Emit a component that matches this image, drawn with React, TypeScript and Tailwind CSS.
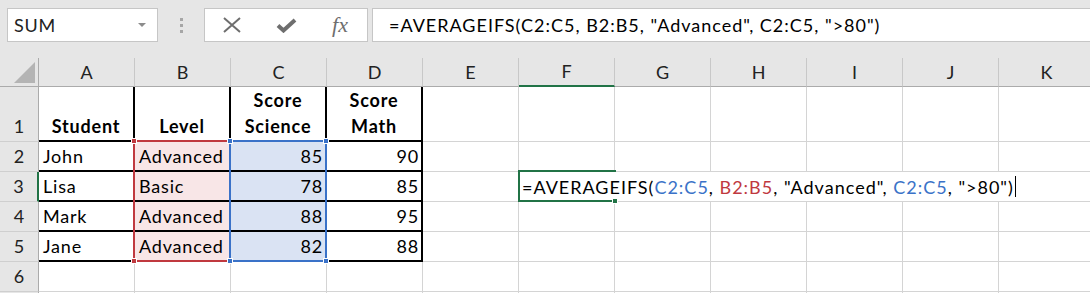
import React from 'react';
import clsx from 'clsx';

const cols = ['A', 'B', 'C', 'D', 'E', 'F', 'G', 'H', 'I', 'J', 'K'];

const students = [
  { name: 'John', level: 'Advanced', science: 85, math: 90 },
  { name: 'Lisa', level: 'Basic', science: 78, math: 85 },
  { name: 'Mark', level: 'Advanced', science: 88, math: 95 },
  { name: 'Jane', level: 'Advanced', science: 82, math: 88 }
];

type CellProps = {
  children?: React.ReactNode;
  edge?: boolean;
  fill?: string;
  align?: 'left' | 'right' | 'center';
  bold?: boolean;
};

function Cell({ children, edge, fill, align = 'left', bold }: CellProps) {
  return (
    <div
      className={clsx(
        'flex w-[96px] shrink-0 items-end overflow-hidden whitespace-pre-line pb-[1px] leading-[26px]',
        edge ? 'border-r-2 border-b-2 border-black' : 'border-r border-b border-[#d4d4d4]',
        align === 'right' && 'justify-end pr-[2px] text-right',
        align === 'center' && 'justify-center text-center',
        align === 'left' && 'pl-[4px]',
        bold && 'font-bold',
        fill
      )}>
      {children}
    </div>
  );
}

function RowHead({ n, active }: { n?: number; active?: boolean }) {
  return (
    <div
      className={clsx(
        'flex w-[39px] shrink-0 items-end justify-center border-b border-[#cfcfcf] bg-[#e6e6e6] pb-[2px] leading-[26px] tracking-normal text-[#222]',
        active ? 'border-r-2 border-r-[#217346]' : 'border-r border-r-[#ababab]'
      )}>
      {n}
    </div>
  );
}

function Handle({ x, y, color }: { x: number; y: number; color: string }) {
  return (
    <span
      className={clsx('absolute size-[6px] border border-white', color)}
      style={{ left: x - 3, top: y - 61 }}
    />
  );
}

const blue = 'text-[#3a72c8]';
const red = 'text-[#c0393f]';

function Formula() {
  return (
    <>
      {'=AVERAGEIFS('}
      <span className={blue}>C2:C5</span>
      {', '}
      <span className={red}>B2:B5</span>
      {', "Advanced", '}
      <span className={blue}>C2:C5</span>
      {', ">80")'}
    </>
  );
}

export default function App() {
  return (
    <div className="h-[293px] w-[1090px] overflow-hidden bg-[#e6e6e6] font-['Lato',sans-serif] text-[18px] tracking-[0.8px] text-black">
      {/* formula bar */}
      <div className="flex h-[58px] items-start pt-2">
        <div className="ml-[7px] flex h-[34px] w-[151px] items-center justify-between border border-[#c6c6c6] bg-white pl-[6px] pr-[11px]">
          <span className="text-[#222]">SUM</span>
          <svg width="8" height="5" viewBox="0 0 8 5">
            <polygon points="0,0 8,0 4,4" fill="#8c8c8c" />
          </svg>
        </div>
        <div className="flex h-[34px] w-[46px] flex-col items-center justify-center gap-[3px]">
          <span className="size-[3px] bg-[#a6a6a6]" />
          <span className="size-[3px] bg-[#a6a6a6]" />
          <span className="size-[3px] bg-[#a6a6a6]" />
        </div>
        <div className="grid h-[34px] w-[164px] grid-cols-3 items-center justify-items-center border border-[#c6c6c6] bg-white">
          <svg width="18" height="16" viewBox="0 0 18 16">
            <path d="M1 1 L17 15 M17 1 L1 15" stroke="#6e6e6e" strokeWidth="2" />
          </svg>
          <svg width="21" height="15" viewBox="0 0 21 15">
            <path d="M2 7.5 L7.5 12.5 L19 2" stroke="#6e6e6e" strokeWidth="4" fill="none" />
          </svg>
          <span className="font-['Liberation_Serif',serif] text-[22px] leading-none tracking-normal text-[#6e6e6e] italic">
            fx
          </span>
        </div>
        <div className="ml-[4px] flex h-[34px] flex-1 items-center whitespace-nowrap border-y border-l border-[#c6c6c6] bg-white pl-[16px] tracking-[1px]">
          =AVERAGEIFS(C2:C5, B2:B5, "Advanced", C2:C5, "&gt;80")
        </div>
      </div>

      {/* sheet */}
      <div className="relative bg-white">
        <div className="flex h-[29px] bg-[#e6e6e6] tracking-normal">
          <div className="flex w-[39px] shrink-0 items-end justify-end border-r border-b border-[#ababab] pr-[3px] pb-[3px]">
            <svg width="21" height="21" viewBox="0 0 21 21">
              <polygon points="21,0 21,21 0,21" fill="#b4b4b4" />
            </svg>
          </div>
          {cols.map(c => (
            <div
              key={c}
              className={clsx(
                'flex w-[96px] shrink-0 items-center justify-center border-r border-r-[#c8c8c8] text-[#222]',
                c === 'F' ? 'border-b-2 border-b-[#217346]' : 'border-b border-b-[#ababab]'
              )}>
              {c}
            </div>
          ))}
        </div>

        <div className="flex h-[55px]">
          <RowHead n={1} />
          <Cell edge align="center" bold>
            Student
          </Cell>
          <Cell edge align="center" bold>
            Level
          </Cell>
          <Cell edge align="center" bold>
            {'Score\nScience'}
          </Cell>
          <Cell edge align="center" bold>
            {'Score\nMath'}
          </Cell>
          {cols.slice(4).map(c => (
            <Cell key={c} />
          ))}
        </div>

        {students.map((s, i) => (
          <div key={s.name} className="flex h-[30px]">
            <RowHead n={i + 2} active={i === 1} />
            <Cell edge>{s.name}</Cell>
            <Cell edge fill="bg-[#f8e6e7]">{s.level}</Cell>
            <Cell edge fill="bg-[#dae3f3]" align="right">
              {s.science}
            </Cell>
            <Cell edge align="right">
              {s.math}
            </Cell>
            <Cell />
            {i === 1 ? (
              <div className="flex flex-1 shrink-0 items-end whitespace-pre border-b border-[#d4d4d4] pb-[1px] pl-[3px] leading-[26px] tracking-[1px]">
                <Formula />
                <span className="mb-[3px] ml-[1px] h-[21px] w-px bg-black" />
              </div>
            ) : (
              cols.slice(5).map(c => <Cell key={c} />)
            )}
          </div>
        ))}

        <div className="flex h-[30px]">
          <RowHead n={6} />
          {cols.map(c => (
            <Cell key={c} />
          ))}
        </div>
        <div className="flex h-[30px]">
          <RowHead />
          {cols.map(c => (
            <Cell key={c} />
          ))}
        </div>

        {/* reference ranges */}
        <div className="absolute top-[82px] left-[133px] h-[122px] w-[98px] border-2 border-[#c0393f]" />
        <div className="absolute top-[82px] left-[229px] h-[122px] w-[98px] border-2 border-[#3a72c8]" />
        <Handle x={134} y={141} color="bg-[#c0393f]" />
        <Handle x={134} y={261} color="bg-[#c0393f]" />
        <Handle x={230} y={141} color="bg-[#3a72c8]" />
        <Handle x={326} y={141} color="bg-[#3a72c8]" />
        <Handle x={230} y={261} color="bg-[#3a72c8]" />
        <Handle x={326} y={261} color="bg-[#3a72c8]" />

        {/* active cell F3 */}
        <div className="absolute top-[112px] left-[518px] h-[32px] w-[98px] border-y-2 border-l-2 border-[#217346]" />
        <span className="absolute top-[140px] left-[612px] size-[6px] border border-white bg-[#217346]" />
      </div>
    </div>
  );
}
